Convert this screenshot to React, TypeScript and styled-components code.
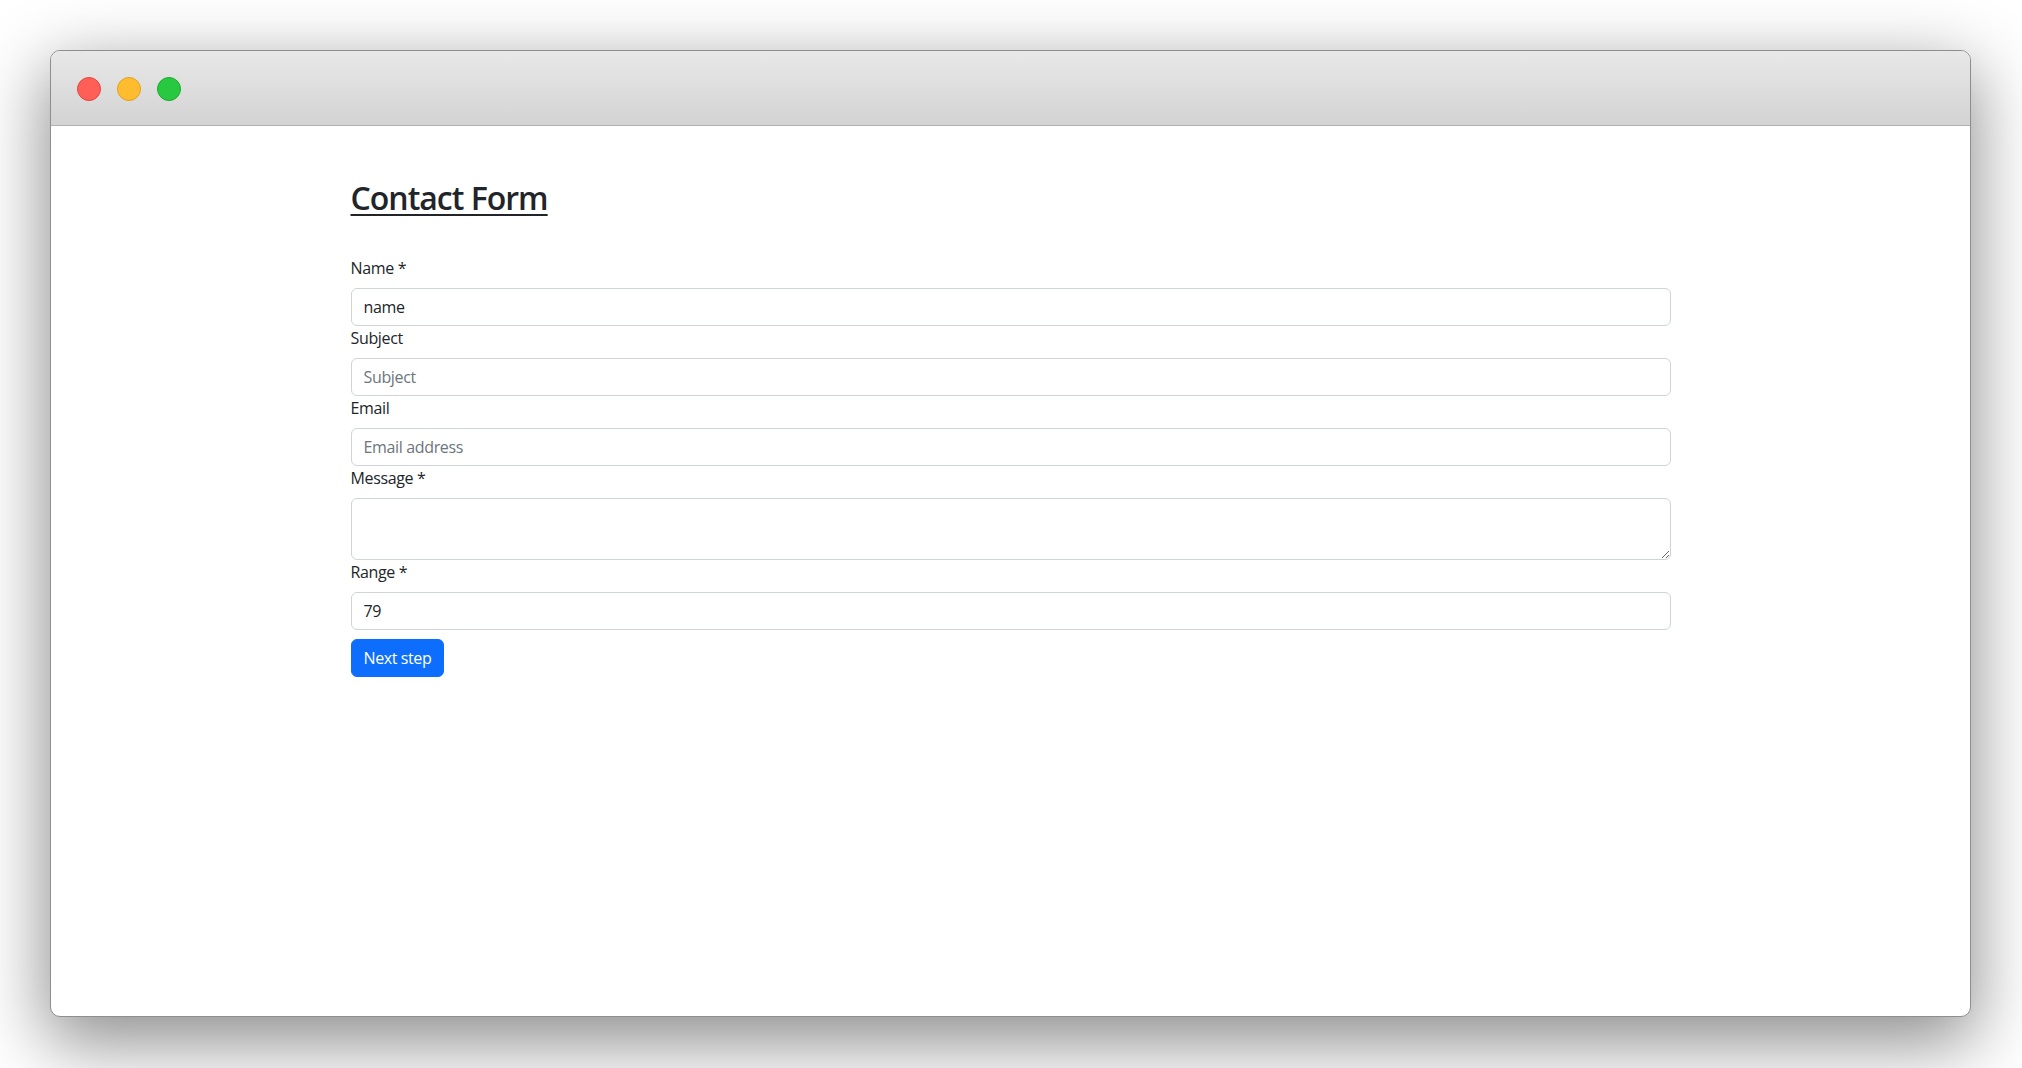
import React from "react";
import styled, { createGlobalStyle } from "styled-components";

const GlobalStyle = createGlobalStyle`
  html, body {
    margin: 0;
    padding: 0;
    background: #ffffff;
  }
  body {
    font-family: "Segoe UI", "Open Sans", "Noto Sans", sans-serif;
    color: #212529;
  }
  * { box-sizing: border-box; }
`;

const Page = styled.div`
  width: 2022px;
  height: 1068px;
  padding: 50px 51px 51px 50px;
  background: #ffffff;
`;

const Window = styled.div`
  height: 100%;
  display: flex;
  flex-direction: column;
  border: 1px solid #8e8e8e;
  border-radius: 10px;
  overflow: hidden;
  background: #ffffff;
  box-shadow: 0 22px 70px 4px rgba(0, 0, 0, 0.45);
`;

const TitleBar = styled.div`
  flex: 0 0 75px;
  display: flex;
  align-items: center;
  gap: 16px;
  padding: 2px 0 0 26px;
  background: linear-gradient(to bottom, #e8e8e8 0%, #d3d3d3 100%);
  border-bottom: 1px solid #b1b1b1;
`;

const Dot = styled.span<{ $fill: string; $edge: string }>`
  width: 24px;
  height: 24px;
  border-radius: 50%;
  background: ${(p) => p.$fill};
  border: 1px solid ${(p) => p.$edge};
`;

const Content = styled.div`
  flex: 1;
  padding-top: 53px;
`;

const Container = styled.div`
  width: 1320px;
  margin: 0 auto;
`;

const Heading = styled.h2`
  margin: 0 0 8px;
  font-size: 32px;
  line-height: 38.4px;
  font-weight: 600;
  letter-spacing: -1px;
  text-decoration: underline;
  text-decoration-thickness: 2px;
  text-underline-offset: 4px;
  color: #212529;
`;

const Form = styled.form`
  margin-top: 39px;
  display: flex;
  flex-direction: column;
`;

const Label = styled.label`
  display: block;
  font-size: 16px;
  line-height: 24px;
  letter-spacing: -0.35px;
  margin-bottom: 8px;
  color: #212529;
`;

const fieldCss = `
  display: block;
  width: 100%;
  padding: 6px 12px;
  font-family: inherit;
  font-size: 16px;
  line-height: 24px;
  letter-spacing: -0.35px;
  color: #212529;
  background: #ffffff;
  border: 1px solid #ced4da;
  border-radius: 6px;
  outline: none;
  &::placeholder { color: #6c757d; opacity: 1; }
`;

const Input = styled.input`
  ${fieldCss}
  height: 38px;
`;

const TextArea = styled.textarea`
  ${fieldCss}
  height: 62px;
  resize: vertical;
`;

const Button = styled.button`
  align-self: flex-start;
  margin-top: 9px;
  height: 38px;
  padding: 6px 12px;
  font-family: inherit;
  font-size: 16px;
  line-height: 24px;
  letter-spacing: -0.4px;
  color: #ffffff;
  background: #0d6efd;
  border: 1px solid #0d6efd;
  border-radius: 6px;
  cursor: pointer;
`;

export default function App() {
  return (
    <>
      <GlobalStyle />
      <Page>
        <Window>
          <TitleBar>
            <Dot $fill="#ff5f57" $edge="#e2463f" />
            <Dot $fill="#febc2e" $edge="#dea123" />
            <Dot $fill="#28c840" $edge="#1aab29" />
          </TitleBar>
          <Content>
            <Container>
              <Heading>Contact Form</Heading>
              <Form onSubmit={(e) => e.preventDefault()}>
                <Label htmlFor="name">Name *</Label>
                <Input id="name" type="text" defaultValue="name" />
                <Label htmlFor="subject">Subject</Label>
                <Input id="subject" type="text" placeholder="Subject" />
                <Label htmlFor="email">Email</Label>
                <Input id="email" type="email" placeholder="Email address" />
                <Label htmlFor="message">Message *</Label>
                <TextArea id="message" rows={2} />
                <Label htmlFor="range">Range *</Label>
                <Input id="range" type="text" defaultValue="79" />
                <Button type="submit">Next step</Button>
              </Form>
            </Container>
          </Content>
        </Window>
      </Page>
    </>
  );
}
